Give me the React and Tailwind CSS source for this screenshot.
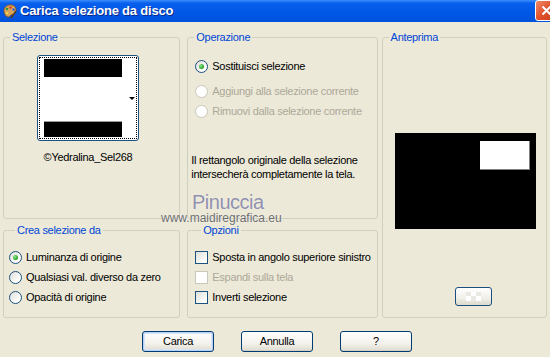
import React from 'react';

const Radio = ({ checked, disabled }) => (
  <span
    className={`flex h-[13px] w-[13px] shrink-0 items-center justify-center rounded-full border ${
      disabled
        ? 'border-[#cac8bb] bg-white'
        : 'border-[#1c5180] bg-[linear-gradient(135deg,#dcdcd7,#ffffff_75%)]'
    }`}
  >
    {checked && (
      <span className="h-[5px] w-[5px] rounded-full bg-[radial-gradient(circle_at_35%_35%,#8ee68c,#21a121_70%)]" />
    )}
  </span>
);

const Check = ({ disabled }) => (
  <span
    className={`h-[13px] w-[13px] shrink-0 border ${
      disabled
        ? 'border-[#cac8bb] bg-white'
        : 'border-[#1c5180] bg-[linear-gradient(135deg,#dcdcd7,#ffffff_80%)]'
    }`}
  />
);

const Option = ({ children, disabled, control }) => (
  <div className={`flex h-[20px] items-center gap-[3px] ${disabled ? 'text-[#aca899]' : 'text-black'}`}>
    {control}
    <span className="ml-[1px]">{children}</span>
  </div>
);

const Legend = ({ children }) => (
  <legend className="ml-[6px] px-[2px] leading-[13px] text-[#0046d5]">{children}</legend>
);

const XpButton = ({ children, isDefault }) => (
  <button
    className={`flex h-[21px] w-[72px] items-center justify-center rounded-[3px] border border-[#003c74] bg-[linear-gradient(to_bottom,#ffffff,#f3f2ec_60%,#dedbce)] text-black ${
      isDefault ? 'shadow-[inset_0_0_0_1px_#b9d1f5,inset_0_0_0_2px_#d8e5f9]' : 'shadow-[inset_0_-1px_0_#d6d0c5]'
    }`}
  >
    {children}
  </button>
);

export default function App() {
  return (
    <div className="relative h-[357px] w-[550px] overflow-hidden bg-[#ece9d8] font-['Liberation_Sans',Arial,sans-serif] text-[11px] tracking-[-0.3px] text-black">
      {/* Title bar */}
      <div className="flex h-[22px] items-start bg-[linear-gradient(to_bottom,#3d8ffb_0%,#0a60ee_14%,#0057e6_55%,#0052dc_100%)]">
        <svg className="ml-[2px] mt-[3px] h-[16px] w-[16px]" viewBox="0 0 16 16">
          <path d="M2 9 C1 4 6 1 10 2 C14 3 15 7 13 10 C12 12 9 11 8 13 C7 15 3 14 2 9z" fill="#d9a35a" stroke="#7a4a1a" strokeWidth="0.8" />
          <circle cx="5" cy="6" r="1.3" fill="#2a9a3a" />
          <circle cx="8.5" cy="4.5" r="1.2" fill="#d83a2a" />
          <circle cx="11.5" cy="6.5" r="1.2" fill="#2f5fd8" />
          <circle cx="5" cy="10" r="1.1" fill="#f4e04a" />
          <path d="M9 15 L14 8" stroke="#5a3a1a" strokeWidth="1.4" />
        </svg>
        <span className="ml-[2px] mt-[3px] text-[13px] leading-[16px] font-bold tracking-[-0.2px] text-white [text-shadow:1px_1px_#0a2a8a]">
          Carica selezione da disco
        </span>
        <div className="ml-auto mr-[-7px] flex h-[21px] w-[22px] items-center justify-center rounded-[3px] border border-white bg-[linear-gradient(135deg,#f08a6a,#e0502a_50%,#c8401c)]">
          <svg className="h-[11px] w-[11px]" viewBox="0 0 11 11">
            <path d="M1.5 1.5 L9.5 9.5 M9.5 1.5 L1.5 9.5" stroke="white" strokeWidth="2" />
          </svg>
        </div>
      </div>

      {/* Body */}
      <div className="flex px-[3px] pt-[9px]">
        {/* Left column */}
        <div className="flex w-[178px] flex-col">
          <fieldset className="h-[188px] rounded-[3px] border border-[#d0d0bf]">
            <Legend>Selezione</Legend>
            <div className="ml-[33px] w-[102px]">
              <div className="mt-[11px] h-[86px] w-[102px] rounded-[3px] border border-[#1c5180] bg-white p-[1px]">
                <div className="flex h-full border border-dotted border-black pl-[4px] py-[1px]">
                  <div className="flex w-[78px] flex-col">
                    <div className="h-[18px] bg-black" />
                    <div className="flex-1 bg-white" />
                    <div className="h-[16px] border-t border-[#9a9a9a] bg-black" />
                  </div>
                  <div className="flex flex-1 items-center justify-end pr-[1px]">
                    <span className="h-0 w-0 border-x-[3px] border-t-[3px] border-x-transparent border-t-black" />
                  </div>
                </div>
              </div>
              <div className="mt-[10px] whitespace-nowrap text-center leading-[13px]">©Yedralina_Sel268</div>
            </div>
          </fieldset>

          <fieldset className="mt-[5px] h-[94px] rounded-[3px] border border-[#d0d0bf] pl-[5px]">
            <Legend>Crea selezione da</Legend>
            <div className="mt-[10px]">
              <Option control={<Radio checked />}>Luminanza di origine</Option>
              <Option control={<Radio />}>Qualsiasi val. diverso da zero</Option>
              <Option control={<Radio />}>Opacità di origine</Option>
            </div>
          </fieldset>
        </div>

        {/* Middle column */}
        <div className="ml-[7px] flex w-[191px] flex-col">
          <fieldset className="h-[188px] rounded-[3px] border border-[#d0d0bf]">
            <Legend>Operazione</Legend>
            <div className="ml-[7px] mt-[12px]">
              <Option control={<Radio checked />}>Sostituisci selezione</Option>
              <div className="mt-[5px]">
                <Option disabled control={<Radio disabled />}>Aggiungi alla selezione corrente</Option>
                <Option disabled control={<Radio disabled />}>Rimuovi dalla selezione corrente</Option>
              </div>
            </div>
            <p className="ml-[3px] mt-[32px] leading-[14px]">
              Il rettangolo originale della selezione
              <br />
              intersecherà completamente la tela.
            </p>
          </fieldset>

          <fieldset className="mt-[5px] h-[94px] rounded-[3px] border border-[#d0d0bf] pl-[7px]">
            <Legend>Opzioni</Legend>
            <div className="mt-[10px]">
              <Option control={<Check />}>Sposta in angolo superiore sinistro</Option>
              <Option disabled control={<Check disabled />}>Espandi sulla tela</Option>
              <Option control={<Check />}>Inverti selezione</Option>
            </div>
          </fieldset>
        </div>

        {/* Right column */}
        <fieldset className="ml-[4px] h-[287px] w-[166px] rounded-[3px] border border-[#d0d0bf]">
          <Legend>Anteprima</Legend>
          <div className="ml-[12px] mt-[89px] flex h-[96px] w-[141px] items-start justify-end bg-black pr-[6px] pt-[8px]">
            <div className="h-[29px] w-[50px] border-b border-r border-[#808080] bg-white" />
          </div>
          <div className="ml-[72px] mt-[58px] flex h-[19px] w-[37px] items-center justify-center rounded-[3px] border border-[#1c4f80] bg-[linear-gradient(to_bottom,#ffffff,#f0efe8_60%,#dcd9cc)]">
            <svg className="h-[9px] w-[15px]" viewBox="0 0 15 9">
              <rect x="0" y="0" width="15" height="9" fill="#e9e8e2" />
              <rect x="5" y="0" width="5" height="4" fill="#ffffff" />
              <rect x="0" y="4" width="5" height="5" fill="#ffffff" />
              <rect x="10" y="4" width="5" height="5" fill="#ffffff" />
            </svg>
          </div>
        </fieldset>
      </div>

      {/* Buttons */}
      <div className="mt-[13px] flex gap-[27px] pl-[142px]">
        <XpButton isDefault>Carica</XpButton>
        <XpButton>Annulla</XpButton>
        <XpButton>?</XpButton>
      </div>

      {/* Watermark */}
      <div className="pointer-events-none absolute left-[192px] top-[192px] text-[20px] leading-none tracking-[-0.5px] text-[#9090ac] [text-shadow:0_0_1px_#ffffff]">
        Pinuccia
      </div>
      <div className="pointer-events-none absolute left-[161px] top-[212px] text-[12px] leading-none tracking-[0px] text-[#6c6c6c] [text-shadow:0_0_1px_#ffffff]">
        www.maidiregrafica.eu
      </div>
    </div>
  );
}
